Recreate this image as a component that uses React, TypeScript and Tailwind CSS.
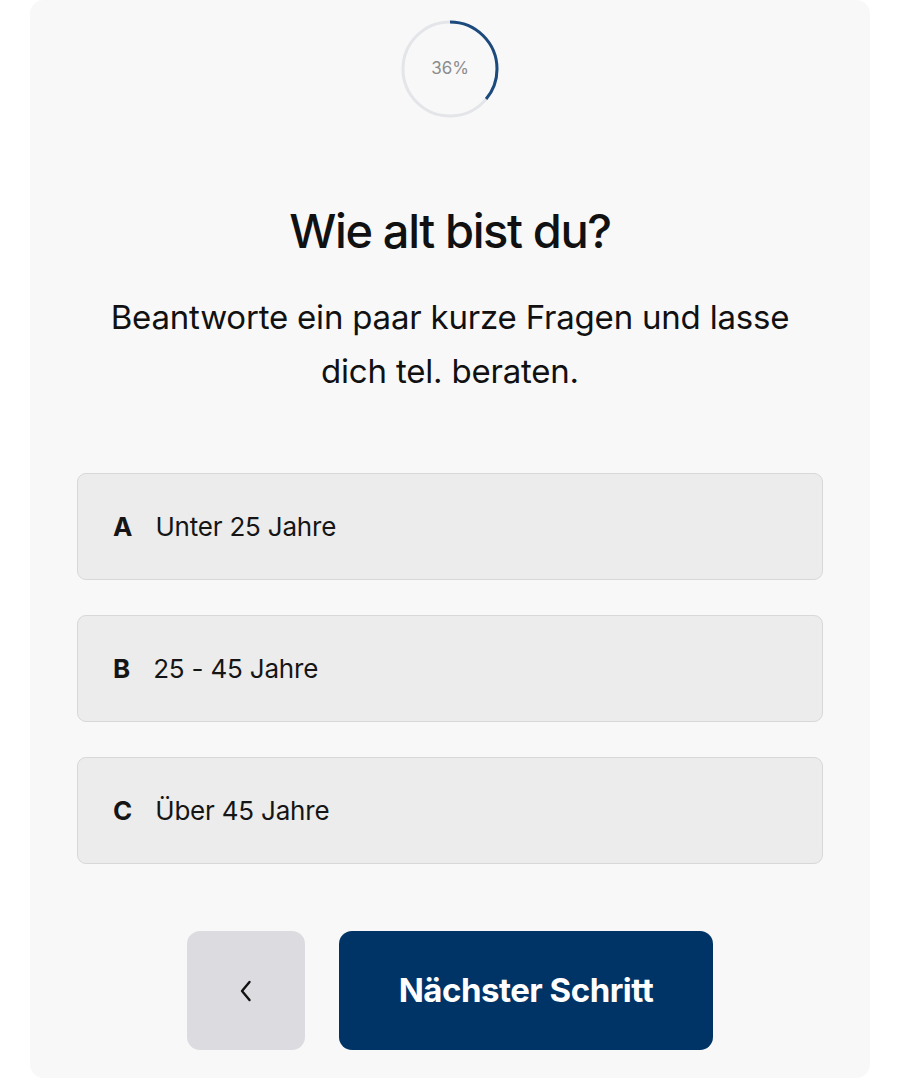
import React from "react";

const options = [
  { letter: "A", label: "Unter 25 Jahre" },
  { letter: "B", label: "25 - 45 Jahre" },
  { letter: "C", label: "Über 45 Jahre" },
];

function Progress() {
  const r = 47;
  const c = 2 * Math.PI * r;
  const pct = 0.36;
  return (
    <div className="relative w-[100px] h-[100px]">
      <svg width="100" height="100" viewBox="0 0 100 100" className="block">
        <circle cx="50" cy="50" r={r} fill="none" stroke="#e3e5e9" strokeWidth="3" />
        <circle
          cx="50"
          cy="50"
          r={r}
          fill="none"
          stroke="#1d4a7c"
          strokeWidth="3"
          strokeDasharray={`${c * pct} ${c}`}
          transform="rotate(-90 50 50)"
        />
      </svg>
      <div className="absolute inset-0 flex items-center justify-center text-[17px] text-[#8c8c8c]">36%</div>
    </div>
  );
}

export default function App() {
  return (
    <div className="min-h-[1080px] bg-white px-[30px]" style={{ fontFamily: "Inter, 'Noto Sans', sans-serif" }}>
      <div className="bg-[#f8f8f8] rounded-[14px] h-[1078px] flex flex-col items-center pt-[19px]">
        <Progress />
        <h1 className="mt-[85px] text-[47px] leading-[54px] font-medium tracking-[-1.4px] text-[#111]">Wie alt bist du?</h1>
        <p className="mt-[32px] text-[33px] leading-[54px] text-center text-[#111] tracking-[-0.2px] w-[740px]">
          Beantworte ein paar kurze Fragen und lasse
          <br />
          dich tel. beraten.
        </p>
        <div className="mt-[75px] w-[746px] flex flex-col gap-[35px]">
          {options.map((o) => (
            <div
              key={o.letter}
              className="h-[107px] rounded-[9px] bg-[#ececec] border border-[#d8d8d8] flex items-center pl-[35px] text-[26px] text-[#151515]"
            >
              <span className="font-bold mr-[23px]">{o.letter}</span>
              <span className="tracking-[-0.2px]">{o.label}</span>
            </div>
          ))}
        </div>
        <div className="mt-[67px] flex gap-[34px]">
          <button className="w-[118px] h-[119px] rounded-[13px] bg-[#dcdce0] flex items-center justify-center text-[#111]">
            <svg width="18" height="26" viewBox="0 0 18 26" fill="none">
              <path d="M12.5 4 L5 13 L12.5 22" stroke="#111" strokeWidth="2.4" strokeLinecap="round" strokeLinejoin="round" />
            </svg>
          </button>
          <button className="w-[374px] h-[119px] rounded-[13px] bg-[#003366] text-white text-[33px] font-bold tracking-[-0.5px]">
            Nächster Schritt
          </button>
        </div>
      </div>
    </div>
  );
}
